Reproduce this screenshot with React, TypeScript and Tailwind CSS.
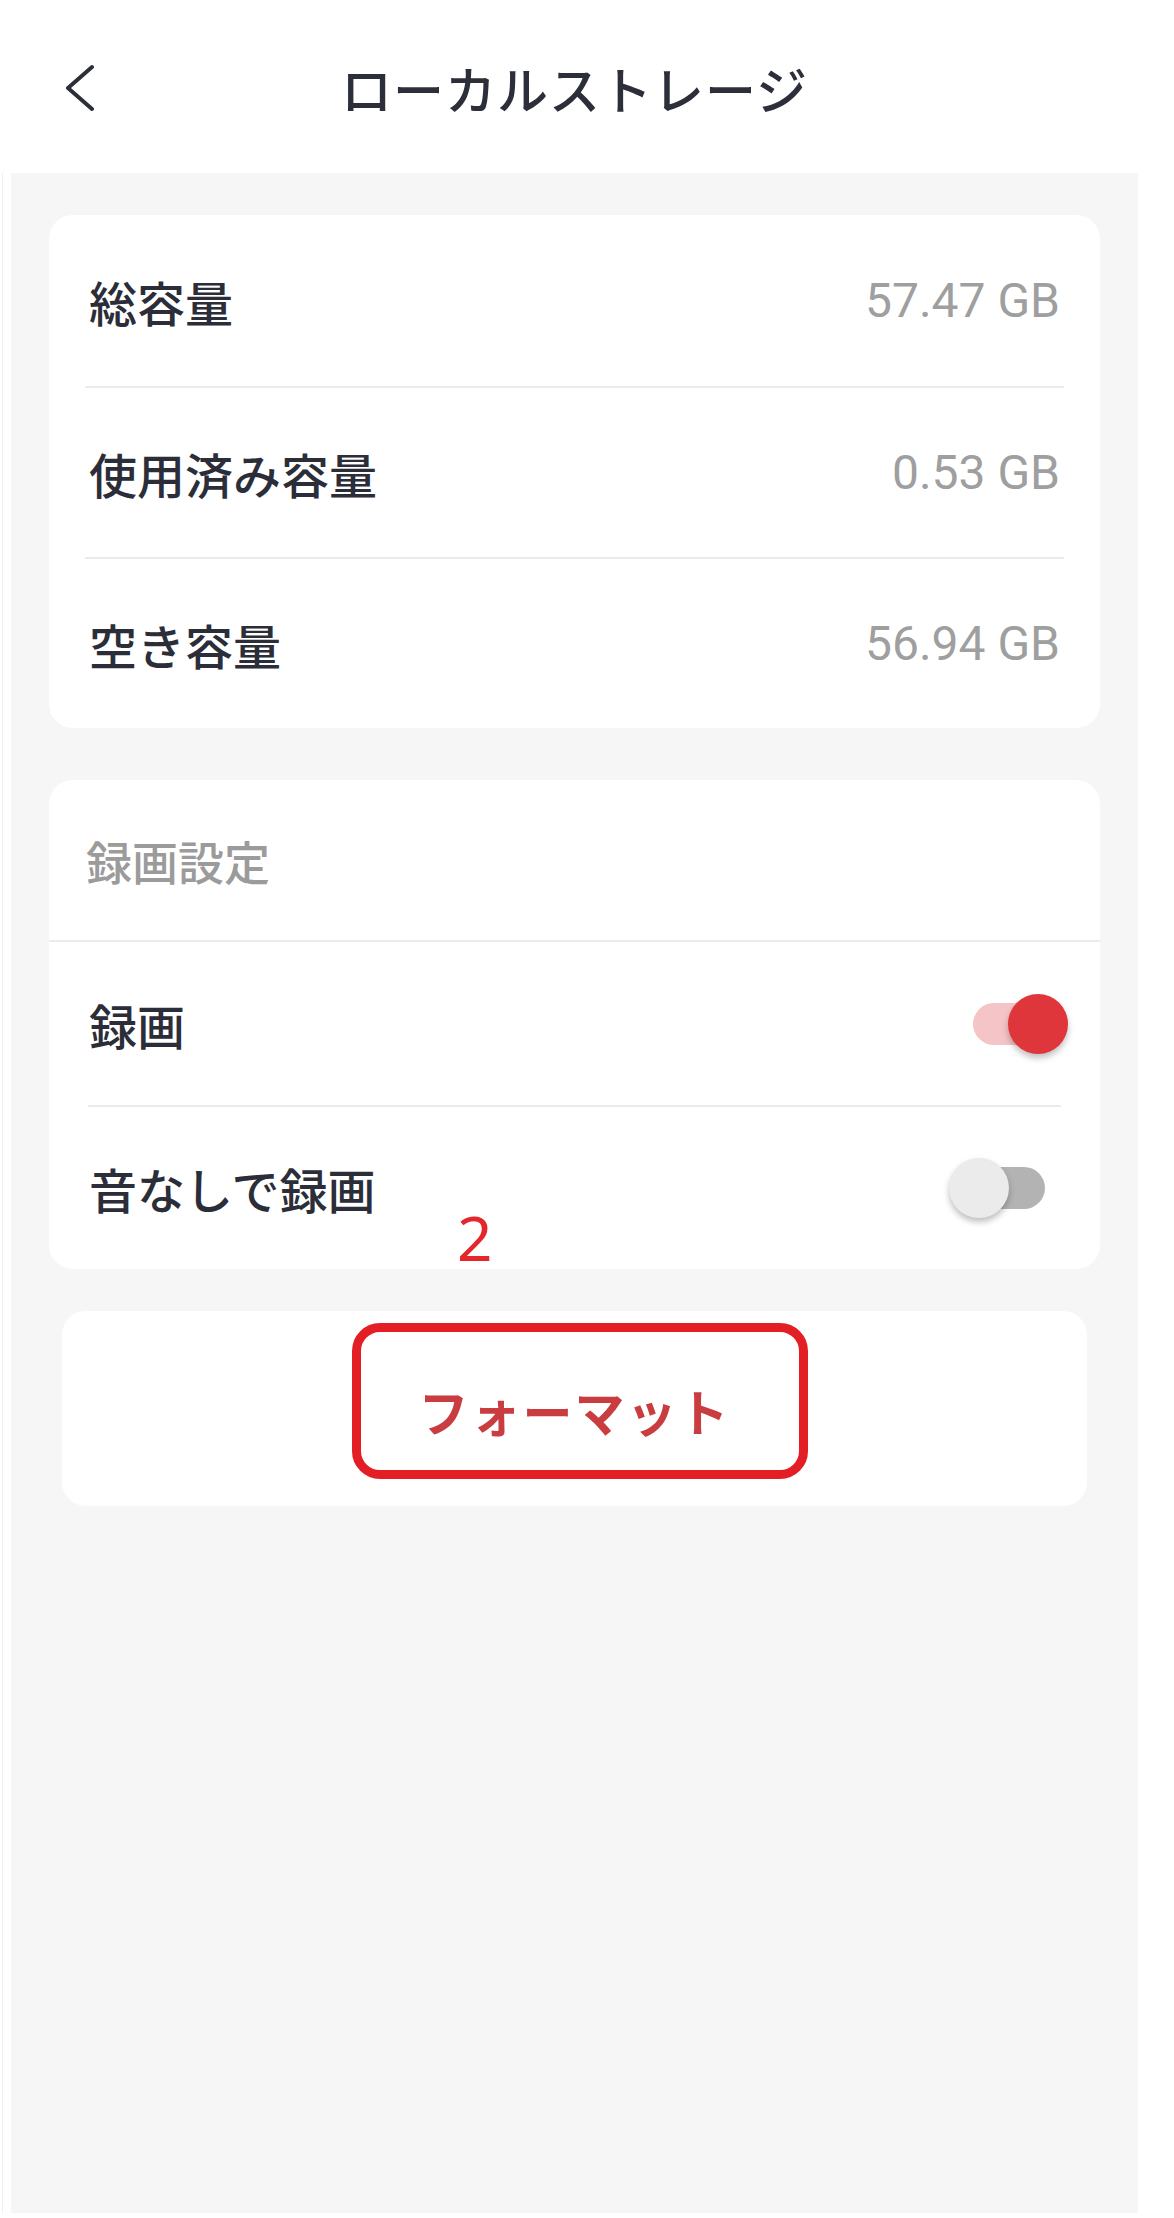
import React from 'react';

const cjk = '"Noto Sans CJK JP", "Noto Sans", sans-serif';

const storageRows = [
  { label: '総容量', value: '57.47 GB' },
  { label: '使用済み容量', value: '0.53 GB' },
  { label: '空き容量', value: '56.94 GB' },
];

function BackIcon() {
  return (
    <svg width="30" height="48" viewBox="0 0 30 48" fill="none">
      <polyline
        points="26,3 2,24 26,45"
        stroke="#2c2f3a"
        strokeWidth="4"
        strokeLinecap="round"
        strokeLinejoin="round"
      />
    </svg>
  );
}

function Toggle({ on }: { on: boolean }) {
  return (
    <div className="relative h-[60px] w-[119px]">
      <div
        className={
          on
            ? 'absolute left-[24px] right-[23px] top-[9px] h-[42px] rounded-full bg-[#f5c4c6]'
            : 'absolute left-[24px] right-[23px] top-[9px] h-[42px] rounded-full bg-[#b3b3b3]'
        }
      />
      <div
        className={
          on
            ? 'absolute right-0 top-0 h-[60px] w-[60px] rounded-full bg-[#df363b] shadow-[0_4px_6px_rgba(0,0,0,0.25)]'
            : 'absolute left-0 top-0 h-[60px] w-[60px] rounded-full bg-[#ebebeb] shadow-[0_4px_6px_rgba(0,0,0,0.25)]'
        }
      />
    </div>
  );
}

export default function App() {
  return (
    <div className="h-[2218px] w-[1174px] bg-white" style={{ fontFamily: cjk }}>
      {/* Header */}
      <header className="ml-[11px] grid h-[173px] w-[1127px] grid-cols-[1fr_auto_1fr] items-center">
        <div className="pl-[55px] pt-[2px]">
          <BackIcon />
        </div>
        <h1 className="pt-[4px] text-[51px] leading-none font-medium tracking-[1px] text-[#2c2f3a]">
          ローカルストレージ
        </h1>
        <div />
      </header>

      <div className="flex">
        <div className="ml-[2px] h-[2040px] w-px bg-[#f0f0f0]" />
        <main className="ml-[8px] flex h-[2040px] w-[1127px] flex-col bg-[#f6f6f6] px-[38px] pt-[42px]">
          {/* Storage info */}
          <section className="flex flex-col rounded-[24px] bg-white">
            {storageRows.map((row, i) => (
              <div key={row.label} className="flex flex-col">
                {i > 0 && <div className="mx-[36px] h-[2px] bg-[#ebebeb]" />}
                <div className={i === 0 ? 'flex h-[171px] items-center justify-between px-[40px]' : 'flex h-[169px] items-center justify-between px-[40px]'}>
                  <span className="text-[48px] leading-none font-medium text-[#2b2e38]">{row.label}</span>
                  <span
                    className="text-[48px] leading-none text-[#9f9f9f]"
                    style={{ fontFamily: 'Roboto, "Noto Sans", sans-serif' }}
                  >
                    {row.value}
                  </span>
                </div>
              </div>
            ))}
          </section>

          {/* Recording settings */}
          <section className="relative mt-[52px] flex flex-col rounded-[24px] bg-white">
            <div className="flex h-[160px] items-center px-[37px]">
              <span className="text-[46px] leading-none font-medium text-[#9b9b9b]">録画設定</span>
            </div>
            <div className="h-[2px] bg-[#ebebeb]" />
            <div className="flex h-[163px] items-center justify-between pl-[40px] pr-[32px]">
              <span className="text-[48px] leading-none font-medium text-[#2b2e38]">録画</span>
              <Toggle on />
            </div>
            <div className="mx-[39px] h-[2px] bg-[#ebebeb]" />
            <div className="flex h-[162px] items-center justify-between pl-[40px] pr-[32px]">
              <span className="text-[48px] leading-none font-medium text-[#2b2e38]">音なしで録画</span>
              <Toggle on={false} />
            </div>
            <span
              className="absolute left-[408px] top-[426px] text-[62px] leading-none text-[#e5262b]"
              style={{ fontFamily: '"Noto Sans", sans-serif' }}
            >
              2
            </span>
          </section>

          {/* Format */}
          <section className="relative mx-[13px] mt-[42px] flex h-[195px] items-center justify-center rounded-[24px] bg-white">
            <span className="pt-[2px] text-[50px] leading-none font-bold tracking-[2px] text-[#c93c40]">フォーマット</span>
            <div className="absolute left-[290px] top-[12px] h-[156px] w-[456px] rounded-[28px] border-[9px] border-[#e31e24]" />
          </section>
        </main>
      </div>
    </div>
  );
}
